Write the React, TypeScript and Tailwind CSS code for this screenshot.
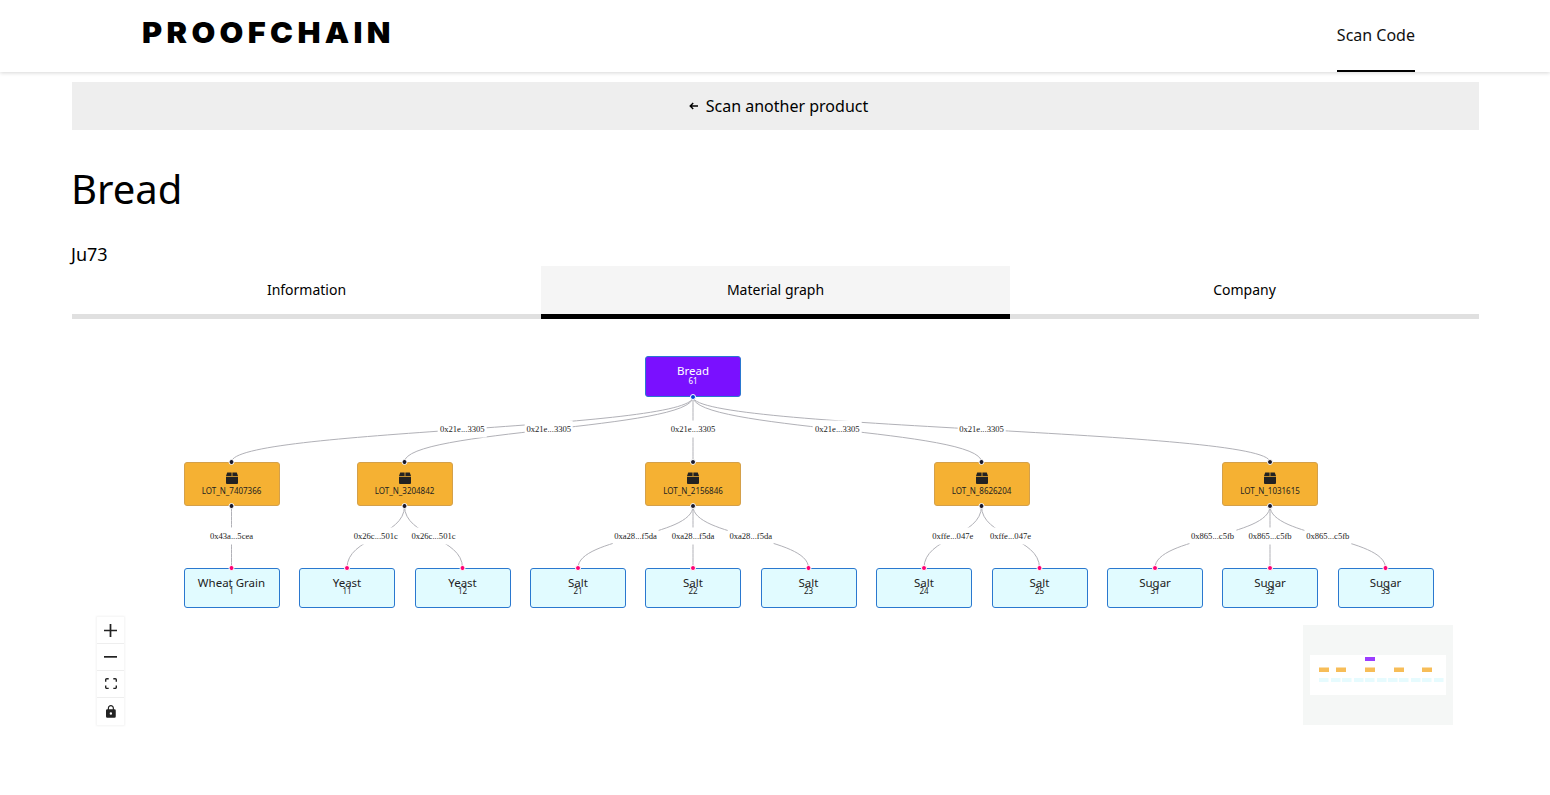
const NODE_W = 96;

const lots = [
  { cx: 231.5, id: "LOT_N_7407366" },
  { cx: 404.5, id: "LOT_N_3204842" },
  { cx: 693, id: "LOT_N_2156846" },
  { cx: 981.5, id: "LOT_N_8626204" },
  { cx: 1270, id: "LOT_N_1031615" },
];

const leaves = [
  { cx: 231.5, t: "Wheat Grain", s: "1", p: 231.5, l: "0x43a...5cea" },
  { cx: 347, t: "Yeast", s: "11", p: 404.5, l: "0x26c...501c" },
  { cx: 462.5, t: "Yeast", s: "12", p: 404.5, l: "0x26c...501c" },
  { cx: 578, t: "Salt", s: "21", p: 693, l: "0xa28...f5da" },
  { cx: 693, t: "Salt", s: "22", p: 693, l: "0xa28...f5da" },
  { cx: 808.5, t: "Salt", s: "23", p: 693, l: "0xa28...f5da" },
  { cx: 924, t: "Salt", s: "24", p: 981.5, l: "0xffe...047e" },
  { cx: 1039.5, t: "Salt", s: "25", p: 981.5, l: "0xffe...047e" },
  { cx: 1155, t: "Sugar", s: "31", p: 1270, l: "0x865...c5fb" },
  { cx: 1270, t: "Sugar", s: "32", p: 1270, l: "0x865...c5fb" },
  { cx: 1385.5, t: "Sugar", s: "33", p: 1270, l: "0x865...c5fb" },
];

const TOP = 319;
const rootBottom = 397 - TOP;
const lotTop = 462 - TOP;
const lotBottom = 506 - TOP;
const leafTop = 568 - TOP;

function bez(x1: number, y1: number, x2: number, y2: number) {
  const m = (y1 + y2) / 2;
  return `M${x1},${y1} C${x1},${m} ${x2},${m} ${x2},${y2}`;
}

const edges = [
  ...lots.map((l) => ({ d: bez(693, rootBottom, l.cx, lotTop), x: (693 + l.cx) / 2, y: (rootBottom + lotTop) / 2 - 0.5, t: "0x21e...3305" })),
  ...leaves.map((l) => ({ d: bez(l.p, lotBottom, l.cx, leafTop), x: (l.p + l.cx) / 2, y: (lotBottom + leafTop) / 2 - 1, t: l.l })),
];

function Dot({ x, y, color }: { x: number; y: number; color: string }) {
  return <circle cx={x} cy={y} r={2.5} fill={color} stroke="#fff" strokeWidth={1} />;
}

function Zoom({ vb, d, w }: { vb: string; d: string; w: number }) {
  return (
    <button className="flex h-[27px] w-[27px] items-center justify-center border-b border-[#eeeeee] bg-white last:border-b-0">
      <svg viewBox={vb} width={w} className="fill-[#222222]">
        <path d={d} />
      </svg>
    </button>
  );
}

const mmLot = [1319, 1336, 1365, 1394, 1422];
const mmLeaf = [1319, 1331, 1342, 1354, 1365, 1377, 1388, 1399, 1411, 1422, 1434];

export default function App() {
  return (
    <div className="min-h-[795px] bg-white font-['Noto_Sans',sans-serif] text-black">
      <header className="flex h-[72px] items-center justify-between pl-[142px] pr-[135px] shadow-[0_1px_4px_rgba(0,0,0,0.16)]">
        <div className="origin-left -translate-y-[4px] scale-x-[1.06] font-['Inter',sans-serif] text-[29px] leading-none font-black tracking-[4.1px]">PROOFCHAIN</div>
        <a className="flex h-[72px] items-center border-b-2 border-black text-base text-[#111111]">Scan Code</a>
      </header>

      <main className="px-[72px] pr-[71px] pt-[10px]">
        <button className="flex h-[48px] w-full items-center justify-center gap-[8px] bg-[#eeeeee] pl-[6px] text-base text-black">
          <svg width="9" height="8" viewBox="0 0 9 8" fill="none" stroke="#000" strokeWidth="1.4" aria-hidden="true">
            <path d="M9 4H1.5M4.2 1L1.2 4l3 3" />
          </svg>
          Scan another product
        </button>
        <h1 className="mt-[31px] -ml-[1px] h-[56px] text-[40px] leading-[56px] font-normal">Bread</h1>
        <p className="mt-[25px] -ml-[1px] h-[24px] text-lg leading-[24px]">Ju73</p>

        <div className="grid grid-cols-3 text-sm">
          <div className="flex h-[53px] items-center justify-center border-b-[5px] border-[#e0e0e0]">Information</div>
          <div className="flex h-[53px] items-center justify-center border-b-[5px] border-black bg-[#f5f5f5]">Material graph</div>
          <div className="flex h-[53px] items-center justify-center border-b-[5px] border-[#e0e0e0]">Company</div>
        </div>
      </main>

      <section className="relative h-[476px] w-full overflow-hidden">
        <svg className="absolute inset-0" width="1550" height="476" fill="none">
          {edges.map((e, i) => (
            <path key={i} d={e.d} stroke="#b1b1b7" strokeWidth={1} />
          ))}
        </svg>
        {edges.map((e, i) => (
          <div
            key={i}
            className="absolute flex h-[17px] -translate-x-1/2 -translate-y-1/2 items-center whitespace-nowrap bg-white px-[2px] font-['Liberation_Serif',serif] text-[8.6px] leading-none text-[#222222]"
            style={{ left: e.x, top: e.y }}
          >
            {e.t}
          </div>
        ))}

        <div className="absolute left-[645px] top-[37px] flex h-[41px] w-[96px] flex-col items-center rounded-[3px] border border-[#2a78cf] bg-[#7a10ff] pt-[8px] text-[11.5px] leading-[11px] text-white">
          <span>Bread</span>
          <span className="text-[8px] leading-[10px]">61</span>
        </div>

        {lots.map((l) => (
          <div
            key={l.id}
            className="absolute top-[143px] flex h-[44px] w-[96px] flex-col items-center rounded-[3px] border border-[#d4a04a] bg-[#f5b133] pt-[9px] text-[8px] leading-[11px] text-[#222222]"
            style={{ left: l.cx - NODE_W / 2 }}
          >
            <svg width="12" height="12" viewBox="0 0 12 12" fill="#222222" aria-hidden="true">
              <path d="M1.2 0.5H5.6V4H0z M6.4 0.5H10.8L12 4H6.4z M0 4.8H12V11a1 1 0 0 1-1 1H1a1 1 0 0 1-1-1z" />
            </svg>
            <span className="mt-[1px]">{l.id}</span>
          </div>
        ))}

        {leaves.map((l) => (
          <div
            key={l.s}
            className="absolute top-[249px] flex h-[40px] w-[96px] flex-col items-center rounded-[3px] border border-[#2a78cf] bg-[#e1fbff] pt-[8px] text-[11.5px] leading-[11px] text-[#222222]"
            style={{ left: l.cx - NODE_W / 2 }}
          >
            <span>{l.t}</span>
            <span className="text-[8px] leading-[6px]">{l.s}</span>
          </div>
        ))}

        <svg className="pointer-events-none absolute inset-0" width="1550" height="476" fill="none">
          <Dot x={693} y={rootBottom} color="#0041d0" />
          {lots.map((l) => (
            <g key={l.id}>
              <Dot x={l.cx} y={lotTop} color="#1a192b" />
              <Dot x={l.cx} y={lotBottom} color="#1a192b" />
            </g>
          ))}
          {leaves.map((l) => (
            <Dot key={l.s} x={l.cx} y={leafTop} color="#ff0072" />
          ))}
        </svg>

        <div className="absolute left-[97px] top-[298px] flex w-[27px] flex-col shadow-[0_0_2px_1px_rgba(0,0,0,0.05)]">
          <Zoom w={13} vb="0 0 32 32" d="M32 18.133H18.133V32h-4.266V18.133H0v-4.266h13.867V0h4.266v13.867H32z" />
          <Zoom w={13} vb="0 0 32 5" d="M0 0h32v4.2H0z" />
          <Zoom w={12} vb="0 0 32 30" d="M3.692 4.63c0-.53.4-.938.939-.938h5.215V0H4.708C2.13 0 0 2.054 0 4.63v5.216h3.692V4.631zM27.354 0h-5.2v3.692h5.17c.53 0 .984.4.984.939v5.215H32V4.631A4.624 4.624 0 0027.354 0zm.954 24.83c0 .532-.4.94-.939.94h-5.215v3.768h5.215c2.577 0 4.631-2.13 4.631-4.707v-5.139h-3.692v5.139zm-23.677.94c-.531 0-.939-.4-.939-.94v-5.138H0v5.139c0 2.577 2.13 4.707 4.708 4.707h5.138V25.77H4.631z" />
          <Zoom w={10} vb="0 0 25 32" d="M21.333 10.667H19.81V7.619C19.81 3.429 16.38 0 12.19 0 8 0 4.571 3.429 4.571 7.619v3.048H3.048A3.056 3.056 0 000 13.714v15.238A3.056 3.056 0 003.048 32h18.285a3.056 3.056 0 003.048-3.048V13.714a3.056 3.056 0 00-3.048-3.047zM12.19 24.533a3.056 3.056 0 01-3.047-3.047 3.056 3.056 0 013.047-3.048 3.056 3.056 0 013.048 3.048 3.056 3.056 0 01-3.048 3.047zm4.724-13.866H7.467V7.619c0-2.59 2.133-4.724 4.723-4.724 2.591 0 4.724 2.133 4.724 4.724v3.048z" />
        </div>

        <div className="absolute left-[1303px] top-[306px] h-[100px] w-[150px] bg-[#f5f7f6]">
          <svg width="150" height="100" aria-hidden="true">
            <rect x="7" y="30" width="136" height="40" fill="#fff" />
            <rect x="62" y="32" width="10" height="4" fill="#9b3dff" />
            {mmLot.map((x) => (
              <rect key={x} x={x - 1303} y="42.5" width="10" height="4.5" fill="#f7bd58" />
            ))}
            {mmLeaf.map((x) => (
              <rect key={x} x={x - 1303} y="53" width="9.5" height="4" fill="#e6fbfe" />
            ))}
          </svg>
        </div>
      </section>
    </div>
  );
}
